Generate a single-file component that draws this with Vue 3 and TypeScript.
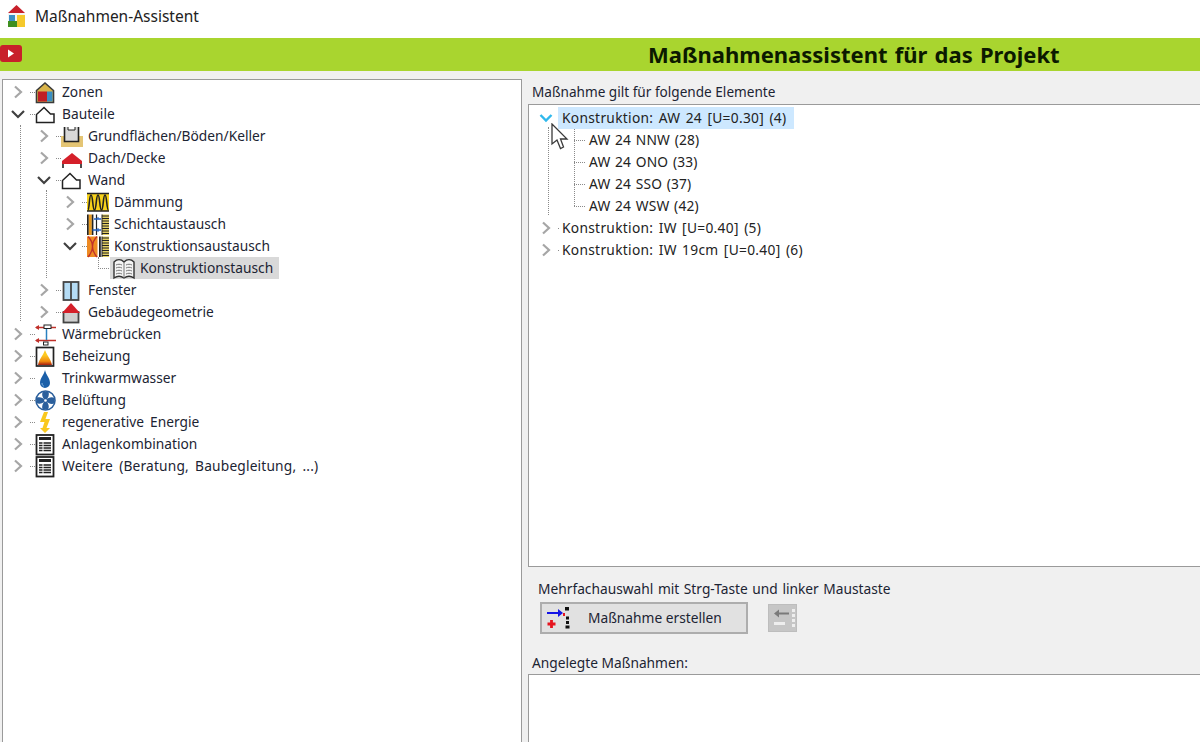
<script setup lang="ts">
interface Row { label: string; level: number; state: 'open' | 'closed' | 'leaf'; icon: string; selected?: boolean }

const hatch = '<rect x="15" y="0.5" width="7" height="20.5" fill="#e2cf63"/><path d="M15 2h7M15 4.500h7M15 7h7M15 9.500h7M15 12h7M15 14.500h7M15 17h7M15 19.500h7" stroke="#222"/><path d="M15 .5v20.500" stroke="#222"/>'

const icons: Record<string, string> = {
  zone: '<path d="M1.500 20.500V8.500L10 1l8.500 7.500v12z" fill="#d9b44a" stroke="#3a3a3a" stroke-width="1.600"/><rect x="3" y="9.500" width="9" height="10" fill="#c01f26"/><rect x="12" y="9.500" width="5.500" height="10" fill="#3a8fc4"/>',
  folder: '<path d="M1.500 18.500v-8L9 3.500l6.500 6.500H19v8.500z" fill="#fff" stroke="#222" stroke-width="1.500"/>',
  floor: '<rect x="0" y="10" width="22" height="11" fill="#e4c574"/><rect x="3" y="1" width="15" height="15" fill="#d8d8d8"/><path d="M3.500 1v14.500h14V1" fill="none" stroke="#222" stroke-width="1.600"/><path d="M7 1v3h7V1" fill="#fff" stroke="#222"/>',
  roof: '<path d="M1 13L11 5l10 8z" fill="#d5202a"/><rect x="1" y="13" width="20" height="3" fill="#d5202a"/><path d="M2 16v4M20 16v4" stroke="#222" stroke-width="1.600"/>',
  insulation: '<rect x="0" y="2" width="22" height="17" fill="#f7d21b"/><path d="M0 1.500h22M0 19h22" stroke="#222" stroke-width="1.600"/><path d="M1 18C2.500 18 2 3 4 3s1.500 15 3.500 15S9 3 11 3s1.500 15 3.500 15S16 3 18 3s1.500 15 3.500 15" fill="none" stroke="#222" stroke-width="1.600"/>',
  layers: '<rect x="0" y="0.500" width="1.800" height="20.500" fill="#222"/><rect x="1.800" y="0.500" width="3" height="20.500" fill="#ea9a1c"/><rect x="4.800" y="0.500" width="1.600" height="20.500" fill="#222"/><path d="M9.500 .5v20.500" stroke="#222" stroke-width="1.200"/><path d="M7 5h7M5.500 16h8.500" stroke="#1f5fc0" stroke-width="1.400"/><path d="M11 3v2M11 14v4" stroke="#1f5fc0"/>' + hatch,
  construction: '<rect x="0" y="0.500" width="10.500" height="20.500" fill="#ee8a22"/><path d="M1 .5c6 6 6 14 0 20.500M10 .5c-6 6-6 14 0 20.500" fill="none" stroke="#c0302a" stroke-width="1.400"/><rect x="12" y="0.500" width="1.800" height="20.500" fill="#222"/>' + hatch,
  book: '<path d="M1 4c3-3 7-3 10 0 3-3 7-3 10 0v16c-3-2-7-2-10 0-3-2-7-2-10 0z" fill="#f4f4f4" stroke="#333" stroke-width="1.400"/><path d="M11 4v16M3 7c2-1 4-1 6 0M3 10c2-1 4-1 6 0M3 13c2-1 4-1 6 0M3 16c2-1 4-1 6 0M13 7c2-1 4-1 6 0M13 10c2-1 4-1 6 0M13 13c2-1 4-1 6 0M13 16c2-1 4-1 6 0" fill="none" stroke="#777"/>',
  window: '<rect x="2.500" y="2" width="15" height="18" fill="#b5dcf5" stroke="#444" stroke-width="1.800"/><path d="M10 2v18" stroke="#444" stroke-width="1.800"/>',
  building: '<rect x="2.500" y="10" width="15" height="10.500" fill="#cfcfcf" stroke="#444" stroke-width="1.800"/><path d="M1 11L10 1l9 10z" fill="#d5202a"/>',
  bridge: '<path d="M1 3.500h20M1 16.500h20" stroke="#c0302a" stroke-width="1.300"/><path d="M0 3.500l4-2.500v5zM0 16.500l4-2.500v5z" fill="#c0302a"/><rect x="9" y="1" width="7" height="3.500" fill="#fff" stroke="#222"/><path d="M11.500 5v11" stroke="#2a80c0" stroke-width="1.500"/><rect x="8.500" y="18" width="4.500" height="3" fill="#fff" stroke="#222"/>',
  heating: '<defs><linearGradient id="fl" x1="0" y1="0" x2="0" y2="1"><stop offset="0.35" stop-color="#fdc920"/><stop offset="0.75" stop-color="#f08a10"/><stop offset="1" stop-color="#a51c10"/></linearGradient></defs><rect x="1.500" y="1.500" width="17" height="18.500" fill="#fff" stroke="#222" stroke-width="1.700"/><path d="M3 19c1-6 5-9 7-15 2 6 6 9 7 15z" fill="url(#fl)"/>',
  drop: '<path d="M10 2c1 5 5 8 5 13a5 5 0 0 1-10 0c0-5 4-8 5-13z" fill="#1a5fa8"/><path d="M7 15c0 2 1 3 2 3" fill="none" stroke="#7fb2e0"/>',
  fan: '<circle cx="10.500" cy="10.500" r="9.500" fill="#fff" stroke="#2b5f9c" stroke-width="1.600"/><g fill="#2b5f9c"><path d="M10.500 10.500C7 7.500 6.500 4 8 1.500h5.500c1 3.500 0 6.500-3 9zM10.500 10.500c3-3.500 6.500-4 9-2.500v5.500c-3.500 1-6.500 0-9-3zM10.500 10.500c3.500 3 4 6.500 2.500 9H7.500c-1-3.500 0-6.500 3-9zM10.500 10.500c-3 3.500-6.500 4-9 2.500V7.500c3.500-1 6.500 0 9 3z"/></g><circle cx="10.500" cy="10.500" r="1.300" fill="#fff"/>',
  bolt: '<path d="M9 0L5 10h4.500l-2 6H5l5 5 5-5h-3.500L15 7h-4.500L13 0z" fill="#f9c81e"/>',
  list: '<rect x="1.500" y="1" width="17" height="19.500" fill="#fff" stroke="#222" stroke-width="1.800"/><rect x="4" y="3" width="12" height="3" fill="#222"/><path d="M4 9h12M4 11.500h12M4 14h12M4 16.500h12" stroke="#222" stroke-width="1.400"/><path d="M8 8v10" stroke="#fff"/>',
}

const rows: Row[] = [
  { label: 'Zonen', level: 0, state: 'closed', icon: 'zone' },
  { label: 'Bauteile', level: 0, state: 'open', icon: 'folder' },
  { label: 'Grundflächen/Böden/Keller', level: 1, state: 'closed', icon: 'floor' },
  { label: 'Dach/Decke', level: 1, state: 'closed', icon: 'roof' },
  { label: 'Wand', level: 1, state: 'open', icon: 'folder' },
  { label: 'Dämmung', level: 2, state: 'closed', icon: 'insulation' },
  { label: 'Schichtaustausch', level: 2, state: 'closed', icon: 'layers' },
  { label: 'Konstruktionsaustausch', level: 2, state: 'open', icon: 'construction' },
  { label: 'Konstruktionstausch', level: 3, state: 'leaf', icon: 'book', selected: true },
  { label: 'Fenster', level: 1, state: 'closed', icon: 'window' },
  { label: 'Gebäudegeometrie', level: 1, state: 'closed', icon: 'building' },
  { label: 'Wärmebrücken', level: 0, state: 'closed', icon: 'bridge' },
  { label: 'Beheizung', level: 0, state: 'closed', icon: 'heating' },
  { label: 'Trinkwarmwasser', level: 0, state: 'closed', icon: 'drop' },
  { label: 'Belüftung', level: 0, state: 'closed', icon: 'fan' },
  { label: 'regenerative Energie', level: 0, state: 'closed', icon: 'bolt' },
  { label: 'Anlagenkombination', level: 0, state: 'closed', icon: 'list' },
  { label: 'Weitere (Beratung, Baubegleitung, ...)', level: 0, state: 'closed', icon: 'list' },
]

const elements = ['AW 24 NNW (28)', 'AW 24 ONO (33)', 'AW 24 SSO (37)', 'AW 24 WSW (42)']
const others = ['Konstruktion: IW [U=0.40] (5)', 'Konstruktion: IW 19cm [U=0.40] (6)']
</script>

<template>
  <div class="window">
    <header class="titlebar">
      <svg class="app-icon" width="20" height="24" viewBox="0 0 20 24">
        <path d="M1 9l8.500-8L18 9z" fill="#c8202a" />
        <rect x="1" y="9" width="17" height="14" fill="#f4f4f4" />
        <rect x="2" y="11" width="6" height="6" fill="#3a8fc4" />
        <rect x="1" y="17" width="9" height="6" fill="#3f8f1f" />
        <rect x="10" y="11" width="8" height="12" fill="#f5c92c" />
      </svg>
      <span>Maßnahmen-Assistent</span>
    </header>

    <div class="banner">
      <svg class="video" width="22" height="17" viewBox="0 0 22 17">
        <rect width="22" height="17" rx="3" fill="#c8202a" />
        <path d="M8 4.500l6 4-6 4z" fill="#fff" />
      </svg>
      <h1>Maßnahmenassistent für das Projekt</h1>
    </div>

    <main class="content">
      <section class="tree-panel">
        <i class="guide guide-a"></i>
        <i class="guide guide-b"></i>
        <i class="guide guide-c"></i>
        <div
          v-for="row in rows"
          :key="row.label"
          class="row"
          :style="{ paddingLeft: 11 + row.level * 26 + 'px' }"
        >
          <span class="toggle">
            <svg v-if="row.state !== 'leaf'" width="14" height="14" viewBox="0 0 14 14">
              <path v-if="row.state === 'open'" d="M1 4l6 6 6-6" class="chev chev-open" />
              <path v-else d="M4 1.500l6 5.500-6 5.500" class="chev" />
            </svg>
          </span>
          <span class="dots"></span>
          <svg class="icon" width="22" height="21" viewBox="0 0 22 21" v-html="icons[row.icon]"></svg>
          <span class="label" :class="{ selected: row.selected }">{{ row.label }}</span>
        </div>
      </section>

      <section class="side">
        <div class="caption first">Maßnahme gilt für folgende Elemente</div>
        <div class="elements">
          <i class="guide guide-d"></i>
          <i class="guide guide-e"></i>
          <div class="erow">
            <svg width="14" height="14" viewBox="0 0 14 14" class="etoggle">
              <path d="M1.500 4l5.500 5.500L12.500 4" class="chev chev-blue" />
            </svg>
            <span class="edot"></span>
            <span class="elabel current">Konstruktion: AW 24 [U=0.30] (4)</span>
          </div>
          <div v-for="e in elements" :key="e" class="erow child">
            <span class="hdots"></span>
            <span class="elabel">{{ e }}</span>
          </div>
          <div v-for="o in others" :key="o" class="erow">
            <svg width="14" height="14" viewBox="0 0 14 14" class="etoggle">
              <path d="M4 1.500l6 5.500-6 5.500" class="chev" />
            </svg>
            <span class="edot"></span>
            <span class="elabel">{{ o }}</span>
          </div>
          <svg class="cursor" width="19" height="27" viewBox="0 0 19 27">
            <path d="M2 1v20l5-4 3.500 8.500 3-1.500-3-8H17z" fill="#fff" stroke="#3a3a3a" stroke-width="1.300" />
          </svg>
        </div>

        <div class="hint">Mehrfachauswahl mit Strg-Taste und linker Maustaste</div>
        <div class="actions">
          <button class="create" type="button">
            <svg width="26" height="24" viewBox="0 0 26 24">
              <path d="M0 7h12" stroke="#1414e6" stroke-width="2" />
              <path d="M11 3l5 4-5 4z" fill="#1414e6" />
              <path d="M4.500 14v8M.5 18h8" stroke="#e6141e" stroke-width="2.800" />
              <rect x="18" y="1" width="4" height="3.500" fill="#111" />
              <rect x="16" y="7" width="2" height="3" fill="#e6141e" />
              <rect x="19" y="10.500" width="3" height="3" fill="#111" />
              <rect x="19" y="15" width="3" height="3" fill="#111" />
              <rect x="18.500" y="19.500" width="4" height="3" fill="#111" />
            </svg>
            <span>Maßnahme erstellen</span>
          </button>
          <button class="remove" type="button" aria-label="Maßnahme entfernen">
            <svg width="26" height="24" viewBox="0 0 26 24">
              <path d="M7 7.500h12" stroke="#7a7a7a" stroke-width="2" />
              <path d="M9 3.500l-5 4 5 4z" fill="#7a7a7a" />
              <path d="M4 17.500h11" stroke="#eee" stroke-width="3" />
              <path d="M23.500 3v19" stroke="#eee" stroke-width="3" stroke-dasharray="3 2" />
            </svg>
          </button>
        </div>
        <div class="caption second">Angelegte Maßnahmen:</div>
        <div class="created"></div>
      </section>
    </main>
  </div>
</template>

<style>
html, body { margin: 0; background: #f0f0f0; overflow: hidden; }
</style>

<style scoped>
.window {
  height: 742px;
  display: flex;
  flex-direction: column;
  overflow: hidden;
  background: #f0f0f0;
  color: #1c2433;
  font-family: "Noto Sans", "DejaVu Sans", sans-serif;
  font-size: 13.750px;
}
.titlebar {
  height: 38px;
  flex: none;
  background: #fff;
  display: flex;
  align-items: center;
  padding-left: 7px;
  gap: 8px;
  color: #222;
  font-size: 15.500px;
  box-sizing: border-box;
}
.app-icon { margin-top: -6px; }
.titlebar span { margin-top: -6px; }
.banner {
  height: 33px;
  flex: none;
  background: #a9d52f;
  display: flex;
  align-items: center;
  position: relative;
}
.video { position: absolute; left: 0; top: 7px; }
.banner h1 {
  margin: 0 0 0 648px;
  font-size: 22px;
  font-weight: 700;
  word-spacing: 1.500px;
  line-height: 33px;
  color: #0c1a00;
  white-space: nowrap;
}
.content {
  flex: 1;
  min-height: 0;
  display: flex;
  padding: 8px 0 0 2px;
  gap: 6px;
}
.tree-panel {
  width: 520px;
  flex: none;
  box-sizing: border-box;
  margin-bottom: -4px;
  background: #fff;
  border: 1px solid #9a9a9a;
  padding-top: 1px;
  position: relative;
}
.row {
  height: 22px;
  display: flex;
  align-items: center;
  margin-left: -3px;
}
.toggle {
  width: 19px;
  height: 14px;
  flex: none;
}
.toggle svg { display: block; }
.chev {
  fill: none;
  stroke: #a6a6a6;
  stroke-width: 2.200;
}
.chev-open { stroke: #404040; }
.chev-blue { stroke: #2fb8ec; stroke-width: 2.400; }
.dots {
  width: 5px;
  flex: none;
  border-top: 1px dotted #8a8a8a;
}
.icon { flex: none; width: 22px; overflow: visible; }
.label {
  margin-left: 5px;
  line-height: 22px;
  word-spacing: 2.500px;
  white-space: nowrap;
}
.row:last-child .label { letter-spacing: 0.170px; }
.selected {
  background: #d9d9d9;
  margin-left: -25px;
  padding: 0 6px 0 30px;
  position: relative;
  z-index: 0;
}
.row:has(.selected) .icon { position: relative; z-index: 1; }
.guide { position: absolute; display: block; }
.guide-a { left: 17px; top: 45px; height: 196px; border-left: 1px dotted #8a8a8a; }
.guide-b { left: 43px; top: 110px; height: 88px; border-left: 1px dotted #8a8a8a; }
.guide-c { left: 95px; top: 177px; width: 14px; height: 11px; border-left: 1px dotted #8a8a8a; border-bottom: 1px dotted #8a8a8a; }
.side {
  flex: 1;
  min-width: 0;
  display: flex;
  flex-direction: column;
}
.caption { padding-left: 4px; line-height: 20px; white-space: nowrap; }
.caption.first { height: 25px; padding-top: 3px; box-sizing: border-box; font-size: 13.600px; }
.elements {
  height: 463px;
  flex: none;
  box-sizing: border-box;
  background: #fff;
  border: 1px solid #9a9a9a;
  border-right: 0;
  padding-top: 2px;
  position: relative;
}
.erow {
  height: 22px;
  display: flex;
  align-items: center;
  padding-left: 10px;
}
.erow.child { padding-left: 45px; }
.etoggle { flex: none; }
.edot { width: 1px; height: 1px; margin: 0 1px 0 5px; background: #8a8a8a; flex: none; }
.hdots { width: 11px; border-top: 1px dotted #8a8a8a; flex: none; margin-right: 2px; }
.elabel {
  padding: 0 2px;
  line-height: 22px;
  letter-spacing: 0.300px;
  word-spacing: 1.500px;
  white-space: nowrap;
  color: #222;
}
.child .elabel { letter-spacing: 0.150px; word-spacing: 1px; }
.current { background: #cde8ff; width: 236px; box-sizing: border-box; padding-left: 4px; margin-left: -2px; }
.guide-d { left: 19px; top: 22px; height: 88px; border-left: 1px dotted #8a8a8a; }
.guide-e { left: 45px; top: 24px; height: 77px; border-left: 1px dotted #8a8a8a; }
.cursor { position: absolute; left: 21px; top: 18px; }
.hint { padding: 12px 0 0 10px; line-height: 20px; word-spacing: 1px; white-space: nowrap; }
.actions {
  display: flex;
  align-items: center;
  padding: 3px 0 0 12px;
  gap: 20px;
}
.create {
  width: 208px;
  height: 32px;
  padding: 0 0 0 5px;
  box-sizing: border-box;
  background: #e1e1e1;
  border: 2px solid #adadad;
  display: flex;
  align-items: center;
  gap: 15px;
  font: inherit;
  color: inherit;
}
.create span { padding-bottom: 2px; }
.remove {
  width: 29px;
  height: 28px;
  padding: 0;
  background: #c6c6c6;
  border: 1px solid #bdbdbd;
  display: flex;
  align-items: center;
  justify-content: center;
}
.caption.second { padding-top: 19px; height: 40px; box-sizing: border-box; }
.created {
  flex: 1;
  margin-bottom: -4px;
  background: #fff;
  border: 1px solid #9a9a9a;
  border-right: 0;
}
</style>
